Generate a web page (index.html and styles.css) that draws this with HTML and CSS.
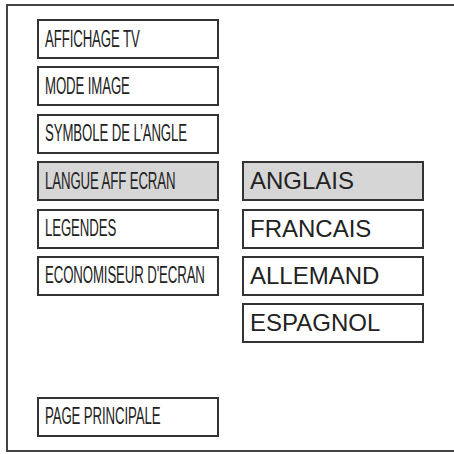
FILE: index.html
```html
<!DOCTYPE html>
<html>
<head>
<meta charset="utf-8">
<link rel="stylesheet" href="styles.css">
</head>
<body>
<div class="frame">
  <div class="menu">
    <div class="item r1 c1"><span class="cond">AFFICHAGE TV</span></div>
    <div class="item r2 c1"><span class="cond">MODE IMAGE</span></div>
    <div class="item r3 c1"><span class="cond">SYMBOLE DE L’ANGLE</span></div>
    <div class="item r4 c1 sel"><span class="cond">LANGUE AFF ECRAN</span></div>
    <div class="item r5 c1"><span class="cond">LEGENDES</span></div>
    <div class="item r6 c1"><span class="cond">ECONOMISEUR D'ECRAN</span></div>
    <div class="item r4 c2 sel"><span class="wide">ANGLAIS</span></div>
    <div class="item r5 c2"><span class="wide">FRANCAIS</span></div>
    <div class="item r6 c2"><span class="wide">ALLEMAND</span></div>
    <div class="item r7 c2"><span class="wide">ESPAGNOL</span></div>
  </div>
  <div class="item home"><span class="cond">PAGE PRINCIPALE</span></div>
</div>
</body>
</html>
```
FILE: styles.css
```css
html, body {
  margin: 0;
  padding: 0;
  background: #fff;
  overflow: hidden;
  width: 454px;
  height: 454px;
}
.frame {
  box-sizing: border-box;
  margin: 4px 0 0 6px;
  width: 448px;
  height: 448px;
  border: 2px solid #444;
  border-right: none;
  padding: 13px 0 0 29px;
}
.menu {
  display: grid;
  grid-template-columns: 182px 182px;
  grid-template-rows: repeat(7, 40px);
  column-gap: 23px;
  row-gap: 7.4px;
}
.item {
  box-sizing: border-box;
  height: 40px;
  width: 182px;
  border: 2px solid #333;
  background: #fff;
  display: flex;
  align-items: center;
  padding-left: 6px;
  overflow: hidden;
  white-space: nowrap;
  color: #222;
  font-family: "Liberation Sans", Arial, sans-serif;
}
.sel { background: #d6d6d6; }
.c1 { grid-column: 1; }
.c2 { grid-column: 2; }
.r1 { grid-row: 1; }
.r2 { grid-row: 2; }
.r3 { grid-row: 3; }
.r4 { grid-row: 4; }
.r5 { grid-row: 5; }
.r6 { grid-row: 6; }
.r7 { grid-row: 7; }
.cond {
  display: inline-block;
  font-size: 23px;
  transform: scaleX(0.575);
  transform-origin: left center;
  letter-spacing: -0.2px;
}
.wide {
  font-size: 24px;
}
.home {
  margin-top: 53.6px;
}
```
